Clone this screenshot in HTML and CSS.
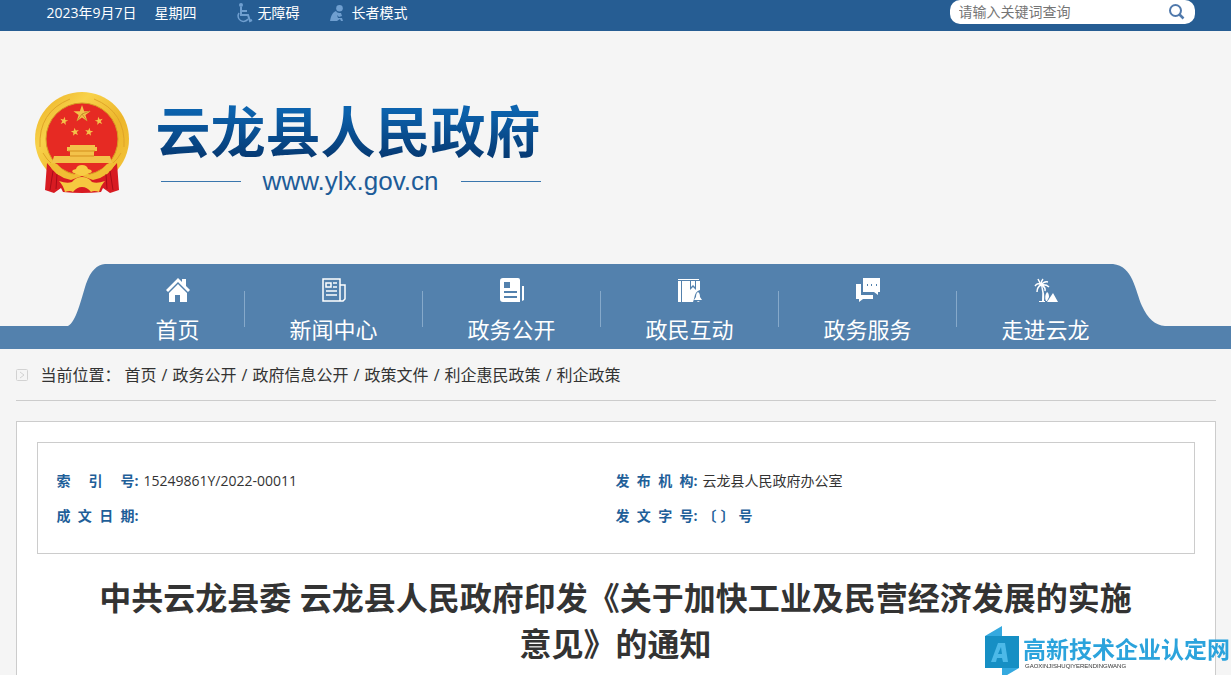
FILE: index.html
```html
<!DOCTYPE html>
<html lang="zh-CN">
<head>
<meta charset="utf-8">
<title>云龙县人民政府</title>
<link rel="stylesheet" href="styles.css">
</head>
<body>
<div class="topbar">
  <div class="wrap topbar-row">
    <span class="date">2023年9月7日</span>
    <span class="weekday">星期四</span>
    <a class="tool tool-access" href="#"><svg width="18" height="22" viewBox="0 0 18 22" fill="none" stroke="#6f9fd0" stroke-width="2"><circle cx="5" cy="3" r="2" fill="#6f9fd0" stroke="none"/><path d="M5 5v8h7l2 6 2-1M5 9h6" /><path d="M3 11a5 5 0 1 0 9 6" stroke-width="1.500"/></svg>无障碍</a>
    <a class="tool tool-elder" href="#"><svg width="14" height="17" viewBox="0 0 14 17" fill="#6f9fd0"><circle cx="9.500" cy="3.300" r="3.300"/><path d="M0 16C1 10 3 7 6 6c1 2 3 2 5 2l1 3-3 1-2-2 1 3 4 0 1 3h-2l-1-2-3 2z"/></svg>长者模式</a>
    <form class="search">
      <input type="search" aria-label="关键词" placeholder="请输入关键词查询">
      <button type="button" aria-label="查询"><svg width="18" height="18" viewBox="0 0 18 18" fill="none" stroke="#5079ac" stroke-width="2"><circle cx="7.500" cy="7.500" r="5.500"/><path d="M11.500 11.500l4 4" stroke-width="2.500"/></svg></button>
    </form>
  </div>
</div>

<header class="wrap masthead">
  <svg class="emblem" viewBox="0 0 96 102" aria-hidden="true">
    <defs>
      <linearGradient id="gold" x1="0" y1="0" x2="1" y2="1"><stop offset="0" stop-color="#e9ab20"/><stop offset=".3" stop-color="#f8d24a"/><stop offset=".6" stop-color="#edb62b"/><stop offset="1" stop-color="#f4c63c"/></linearGradient>
      <polygon id="star" points="0,-10 2.400,-3.100 9.500,-3.100 3.800,1.200 5.900,8.100 0,4 -5.900,8.100 -3.800,1.200 -9.500,-3.100 -2.400,-3.100"/>
    </defs>
    <circle cx="48" cy="47" r="47" fill="url(#gold)"/>
    <path d="M6 55Q4 20 36 7M90 55q2-35-30-48M9 61q4 7 8 10M87 61q-4 7-8 10" fill="none" stroke="#e0a428"/>
    <circle cx="48" cy="47" r="36" fill="#e62a23" stroke="#d69a24"/>
    <g fill="#f3c24a">
      <use href="#star" transform="translate(48 22) scale(.9)"/>
      <use href="#star" transform="translate(30 29) rotate(12) scale(.43)"/>
      <use href="#star" transform="translate(65 29) rotate(-12) scale(.43)"/>
      <use href="#star" transform="translate(41 40) rotate(-8) scale(.43)"/>
      <use href="#star" transform="translate(55 40) rotate(8) scale(.43)"/>
      <path d="M36 53h25v2h2v4h-3v5h16l2 7H18l2-7h16v-5h-3v-4h3z"/>
    </g>
    <path d="M48 22l8-3M48 22l5 7M48 22l-5 7" stroke="#c8932c" fill="none"/>
    <path d="M34 59h27M36 64h24" stroke="#d48f1d"/>
    <path d="M13 71 11 98l9 3 7-5 2 4q19 2 38 0l2-4 7 5 9-3-2-27-11 12H24z" fill="#d81b22"/>
    <path d="M14 71q5 2 9 1 8 10 17 11 5-7 16 0 9-1 17-11 4 1 9-1-7 14-23 17l-11-4-11 4Q21 85 14 71z" fill="#f1bd34"/>
    <path d="M40 81q-3-1-1-3l3-1q1-4 6-4t6 4l3 1q2 2-1 3l-8 3z" fill="#f8cc44"/>
    <path d="M25 89q8 3 13 1 4-5 10-5t10 5q5 2 13-1-4 4-6 11-5-2-8 0-4-5-9-5t-9 5q-3-2-8 0-2-7-6-11z" fill="#f6c840"/>
    <path d="m19 79-3 19m7-16-1 15m54-18 3 19m-7-16 1 15" stroke="#a80d18" fill="none"/>
  </svg>
  <div class="brand">
    <h1>云龙县人民政府</h1>
    <p class="domain"><span>www.ylx.gov.cn</span></p>
  </div>
</header>

<nav class="nav">
  <div class="wrap nav-row">
    <svg class="cap-left" viewBox="0 0 37 62" aria-hidden="true"><path d="M0 62C8 58 13 36 18 20 23 6 29 1 37 0V62z"/></svg>
    <ul class="menu">
      <li><a href="#"><svg viewBox="0 0 24 25"><path d="M12 0 0 12l2 2L12 4l10 10 2-2-4-4V1h-4v3z"/><path d="M12 6 3 15v9h6v-7h5v7h7v-9z"/></svg>首页</a></li>
      <li><a href="#"><svg viewBox="0 0 24 25"><path d="M1 1h17v22H1zM18 7h5v14l-2 2h-3" fill="none" stroke="#fff" stroke-width="1.500"/><path d="M4 5h5v4H4zM11 5h4M11 9h4M4 13h11M4 17h11" fill="none" stroke="#fff" stroke-width="1.500"/></svg>新闻中心</a></li>
      <li><a href="#"><svg viewBox="0 0 24 25"><path fill-rule="evenodd" d="M3 0h15q2 0 2 2v22H3q-3 0-3-3V3q0-3 3-3zM4 4v6h6V4zM4 13v2h13v-2zM4 18v2h13v-2zM22 8h2v14l-2 1z"/></svg>政务公开</a></li>
      <li><a href="#"><svg viewBox="0 0 24 25"><path d="M0 1h21v1H0zM0 3h3v21H0z"/><path fill-rule="evenodd" d="M4 3h18v9q-5 1-6 9l-1 3H4zM12 3v9l3-3 3 3V3h-1v6l-2-2-2 2V3z"/><path d="M16 22l2-3q0-4 2-5 2 1 2 5l2 3zm3 1h3l-2 1z"/></svg>政民互动</a></li>
      <li><a href="#"><svg viewBox="0 0 24 25"><path d="M0 6h5v11h12v4H7l-4 3v-3H0z"/><path fill-rule="evenodd" d="M7 0h17v14h-2v3l-4-3H7zM11 6v2h1V6zM15 6v2h1V6zM20 6v2h1V6z"/></svg>政务服务</a></li>
      <li><a href="#"><svg viewBox="0 0 24 25"><path d="M7 7Q4 4 1 8M7 7Q3 9 3 14M7 7Q5 3 4 1M7 7Q7 3 9 1M7 7q3-4 7-3M7 7q5-1 8 2M7 7q5 2 4 6" fill="none" stroke="#fff" stroke-width="1.500"/><path d="M7 7h1q3 9 2 16H8q1-8-1-16zM5 23h6v1H5zM12 23q-2-5 1-9 2 1 2 5l-2 4zM13 24l6-9 5 9z"/></svg>走进云龙</a></li>
    </ul>
    <svg class="cap-right" viewBox="0 0 52 62" aria-hidden="true"><path d="M0 0C20 2 22 26 29 42 35 55 42 61 52 62H0z"/></svg>
  </div>
</nav>

<main class="wrap">
  <div class="crumbs">
    <svg width="12" height="12" viewBox="0 0 12 12" fill="none" stroke="#d2d2d2"><rect x=".5" y=".5" width="11" height="11" rx="1"/><path d="m4 3 4 3-4 3"/></svg>
    <span class="crumbs-title">当前位置：</span>
    <ol>
      <li><a href="#">首页</a></li>
      <li><a href="#">政务公开</a></li>
      <li><a href="#">政府信息公开</a></li>
      <li><a href="#">政策文件</a></li>
      <li><a href="#">利企惠民政策</a></li>
      <li><a href="#">利企政策</a></li>
    </ol>
  </div>
  <article class="article">
    <dl class="meta">
      <div><dt>索引号</dt><dd>15249861Y/2022-00011</dd></div>
      <div><dt>发布机构</dt><dd>云龙县人民政府办公室</dd></div>
      <div><dt>成文日期</dt><dd></dd></div>
      <div><dt>发文字号</dt><dd class="doc-no"><span>〔</span><span>〕</span><span>号</span></dd></div>
    </dl>
    <h2>中共云龙县委 云龙县人民政府印发《关于加快工业及民营经济发展的实施意见》的通知</h2>
  </article>
</main>

<aside class="stamp">
  <svg width="34" height="49" viewBox="0 0 34 49" aria-hidden="true"><path d="M0 10 17 0v10zM17 42h17L17 52z" fill="#35a9df"/><path d="M0 10h34v32H0z" fill="#168fc4"/><path fill-rule="evenodd" d="M6 36 13 17h7l3 19h-5l-1-4h-5l-1 4zM13 28h4l-1-7z" fill="#4cb9e8"/></svg>
  <div>
    <p class="stamp-name">高新技术企业认定网</p>
    <p class="stamp-sub">GAOXINJISHUQIYERENDINGWANG</p>
  </div>
</aside>
</body>
</html>
```
FILE: styles.css
```css
* { box-sizing: border-box; }

body {
  margin: 0;
  background: #f5f5f5;
  color: #333;
  font: 14px/26px "Open Sans", "Noto Sans CJK SC", sans-serif;
}

a { color: inherit; text-decoration: none; }
ul, ol, dl, dd, p, h1, h2 { margin: 0; padding: 0; list-style: none; }
svg { display: block; flex: none; }

.wrap { max-width: 1200px; margin: 0 auto; }

.topbar { background: #265d93; color: #fff; }
.topbar-row { display: flex; align-items: flex-start; height: 31px; padding: 0 21px 0 31px; }
.weekday { margin-left: 18px; }
.tool { display: flex; align-items: center; gap: 6px; height: 26px; }
.tool-access { margin-left: 39px; gap: 4px; }
.tool-elder { margin-left: 30px; gap: 8px; }

.search {
  display: flex;
  align-items: center;
  width: 245px;
  height: 24px;
  margin-left: auto;
  padding: 0 9px;
  border-radius: 10px;
  background: #fff;
}
.search input {
  flex: 1;
  min-width: 0;
  padding: 0;
  border: 0;
  outline: 0;
  background: none;
  font: inherit;
}
.search input::placeholder { color: #757575; opacity: 1; }
.search button { padding: 0; border: 0; background: none; }

.masthead {
  display: flex;
  align-items: flex-start;
  gap: 26px;
  height: 233px;
  padding: 61px 18px 0;
}
.emblem { width: 96px; height: 102px; }
.brand { padding-top: 4px; }
.brand h1 {
  font-size: 55px;
  line-height: 70px;
  background: linear-gradient(#0c63ae 20%, #063b75 85%);
  background-clip: text;
  -webkit-background-clip: text;
  color: transparent;
}
.domain {
  display: flex;
  align-items: center;
  justify-content: space-between;
  margin: 2px 0 0 5px;
  color: #1d5c98;
  font: 26px/26px "Liberation Sans", sans-serif;
}
.domain::before,
.domain::after { content: ""; width: 80px; height: 1px; background: #3a76ad; }

.nav { background: linear-gradient(#5381ad, #5381ad) bottom / 100% 23px no-repeat; }
.nav-row { display: flex; height: 85px; padding: 0 51px 0 52px; }
.cap-left, .cap-right { height: 62px; fill: #5381ad; }
.cap-left { width: 37px; }
.cap-right { width: 52px; }
.menu { display: flex; flex: 1; min-width: 0; padding-left: 6px; background: #5381ad; }
.menu li {
  flex: none;
  padding: 14px 45px 0;
  background: linear-gradient(#86a9ca, #86a9ca) right 27px / 1px 36px no-repeat;
}
.menu li:last-child { padding-right: 20px; background: none; }
.menu a {
  display: flex;
  flex-direction: column;
  align-items: center;
  gap: 12px;
  color: #fff;
  font-size: 22px;
  line-height: 28px;
}
.menu svg { width: 24px; height: 25px; fill: #fff; }

.crumbs {
  display: flex;
  align-items: center;
  height: 52px;
  border-bottom: 1px solid #ccc;
  font-size: 16px;
  line-height: 24px;
}
.crumbs-title { width: 84px; margin-left: 13px; }
.crumbs ol { display: flex; }
.crumbs li { display: flex; }
.crumbs li + li::before { content: "/"; width: 16px; text-align: center; }

.article {
  min-height: 280px;
  margin-top: 20px;
  padding: 20px 20px 30px;
  border: 1px solid #ccc;
  background: #fff;
}
.meta {
  display: grid;
  grid-template-columns: 1fr 1fr;
  padding: 20px 19px;
  border: 1px solid #ccc;
  line-height: 35px;
}
.meta div { display: flex; height: 35px; }
.meta dt {
  width: 78px;
  color: #1f5f99;
  font-weight: bold;
  text-align: justify;
  text-align-last: justify;
}
.meta dt + dd::before { content: ":"; width: 9px; color: #1f5f99; font-weight: bold; }
.meta dd { display: flex; }
.doc-no { color: #1f5f99; font-weight: bold; }
.doc-no span + span { margin-left: 4px; }

.article h2 {
  padding: 21px 50px 0;
  font-size: 32px;
  line-height: 46px;
  text-align: center;
}

.stamp { position: fixed; right: 1px; bottom: 0; display: flex; gap: 4px; }
.stamp-name { padding-top: 10px; color: #2ba3dc; font-size: 23px; font-weight: bold; line-height: 27px; }
.stamp-sub { padding-left: 2px; font: 6px/6px "Liberation Sans", sans-serif; }
```
